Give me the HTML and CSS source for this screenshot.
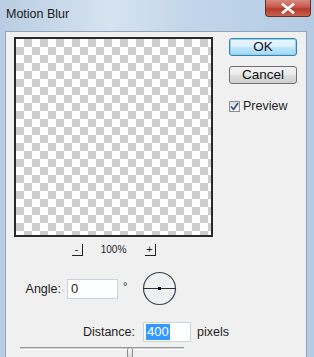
FILE: index.html
```html
<!DOCTYPE html>
<html lang="en">
<head>
    <meta charset="UTF-8">
    <title>Motion Blur</title>
    <link rel="stylesheet" href="styles.css">
</head>
<body>
    <div class="window">
        <div class="titlebar">
            <span class="title">Motion Blur</span>
            <div class="close">
                <svg width="14" height="11" viewBox="0 0 14 11">
                    <path d="M2 1.5 L12 9.5 M12 1.5 L2 9.5" stroke="#ffffff" stroke-width="2.6" stroke-linecap="square"/>
                </svg>
            </div>
        </div>
        <div class="client">
            <div class="main">
                <div class="left">
                    <div class="preview"></div>
                    <div class="zoom-row">
                        <span class="zoom-btn">-</span>
                        <span class="zoom-value">100%</span>
                        <span class="zoom-btn">+</span>
                    </div>
                </div>
                <div class="side">
                    <button class="btn btn-default">OK</button>
                    <button class="btn">Cancel</button>
                    <label class="check">
                        <span class="box">
                            <svg width="9" height="9" viewBox="0 0 9 9">
                                <path d="M1 4.5 L3.5 7.5 L8 1" fill="none" stroke="#2b4a8a" stroke-width="1.6"/>
                            </svg>
                        </span>
                        Preview
                    </label>
                </div>
            </div>
            <div class="angle-row">
                <span class="label angle-label">Angle:</span>
                <span class="field angle-field">0</span>
                <span class="deg">&deg;</span>
                <svg class="dial" width="35" height="35" viewBox="0 0 35 35">
                    <circle cx="17.5" cy="17.5" r="16" fill="none" stroke="#3c4454" stroke-width="1.2"/>
                    <line x1="1.5" y1="17.5" x2="33.5" y2="17.5" stroke="#2a2f3a" stroke-width="1.2"/>
                    <rect x="16" y="16" width="3" height="3" fill="#111"/>
                </svg>
            </div>
            <div class="distance-row">
                <span class="label distance-label">Distance:</span>
                <span class="field distance-field"><span class="sel">400</span></span>
                <span class="unit">pixels</span>
            </div>
            <div class="slider">
                <div class="track"></div>
                <div class="thumb"></div>
            </div>
        </div>
    </div>
</body>
</html>
```

FILE: styles.css
```css
:root {
    --client-bg: #f0f0f0;
    --text: #1e1e1e;
}
body {
    margin: 0;
    font-family: "Liberation Sans", Arial, sans-serif;
    color: var(--text);
}
.window {
    width: 314px;
    height: 357px;
    overflow: hidden;
    background: linear-gradient(90deg, #b9cde2 0%, #d6e3f0 35%, #c2d6ea 60%, #b3cbe3 100%);
    padding: 0 7px 0 5px;
    box-sizing: border-box;
    display: flex;
    flex-direction: column;
}
.titlebar {
    height: 31px;
    display: flex;
    align-items: flex-start;
    flex-shrink: 0;
}
.title {
    font-size: 12.5px;
    margin-top: 7px;
    margin-left: 1px;
    color: #1a1a1a;
}
.close {
    margin-left: auto;
    margin-right: -4px;
    width: 46px;
    height: 17px;
    box-sizing: border-box;
    border: 1px solid #6c2c24;
    border-top: none;
    border-radius: 0 0 4px 4px;
    background: linear-gradient(#d98a7e 0%, #c5574a 45%, #b23a2c 55%, #c9624f 100%);
    display: flex;
    justify-content: center;
    align-items: center;
}
.client {
    flex: 1;
    background: var(--client-bg);
    border: 1px solid #8fa3b9;
    border-bottom: none;
    padding: 5px 0 0 8px;
    font-size: 12px;
}
.main {
    display: flex;
    gap: 16px;
}
.preview {
    width: 199px;
    height: 200px;
    box-sizing: border-box;
    border: 2px solid #2a2a2a;
    background-color: #ffffff;
    background-image:
        linear-gradient(45deg, #cdcdcd 25%, transparent 25%, transparent 75%, #cdcdcd 75%),
        linear-gradient(45deg, #cdcdcd 25%, transparent 25%, transparent 75%, #cdcdcd 75%);
    background-size: 16px 16px;
    background-position: 0 0, 8px 8px;
}
.zoom-row {
    display: flex;
    justify-content: center;
    align-items: center;
    gap: 18px;
    margin-top: 6px;
    height: 13px;
}
.zoom-btn {
    width: 11px;
    height: 12px;
    box-sizing: border-box;
    border-right: 1px solid #222;
    border-bottom: 1px solid #222;
    font-size: 11px;
    line-height: 10px;
    text-align: center;
}
.zoom-value {
    font-size: 10px;
    width: 26px;
    text-align: center;
}
.side {
    display: flex;
    flex-direction: column;
    padding-top: 1px;
}
.btn {
    width: 68px;
    height: 18px;
    margin-bottom: 10px;
    font-family: inherit;
    font-size: 13.5px;
    line-height: 14px;
    padding: 0;
    color: #111;
    border: 1px solid #707070;
    border-radius: 3px;
    background: linear-gradient(#f2f2f2 0%, #ebebeb 50%, #dddddd 51%, #cfcfcf 100%);
}
.btn-default {
    border-color: #3c7fb1;
    box-shadow: inset 0 0 0 1px #8ad4f0;
    background: linear-gradient(#eaf6fd 0%, #d9f0fc 50%, #bee6fd 51%, #a7d9f5 100%);
}
.check {
    display: flex;
    align-items: center;
    gap: 3px;
    margin-top: 5px;
    font-size: 12.5px;
}
.box {
    width: 11px;
    height: 11px;
    box-sizing: border-box;
    border: 1px solid #8f8f8f;
    background: linear-gradient(#dcdcdc, #fafafa);
    display: flex;
    justify-content: center;
    align-items: center;
}
.angle-row,
.distance-row {
    display: flex;
    align-items: center;
    font-size: 12.5px;
}
.angle-row {
    margin-top: 15px;
    height: 35px;
}
.label {
    text-align: right;
}
.angle-label {
    width: 47px;
}
.field {
    height: 20px;
    box-sizing: border-box;
    border: 1px solid #c9d3dd;
    background: #ffffff;
    display: flex;
    align-items: center;
    padding-left: 3px;
    font-size: 13px;
}
.angle-field {
    width: 51px;
    margin-left: 6px;
}
.deg {
    margin-left: 5px;
    margin-top: -6px;
    font-size: 11px;
}
.dial {
    margin-left: 15px;
}
.distance-row {
    margin-top: 15px;
    height: 21px;
}
.distance-label {
    width: 121px;
}
.distance-field {
    width: 48px;
    margin-left: 8px;
    padding-left: 2px;
}
.sel {
    background: #3399ff;
    color: #ffffff;
    padding: 0 1px;
    line-height: 16px;
}
.unit {
    margin-left: 6px;
}
.slider {
    position: relative;
    height: 12px;
    margin: 4px 0 0 6px;
    width: 164px;
}
.track {
    margin-top: 5px;
    height: 1px;
    border-top: 1px solid #9a9a9a;
    border-bottom: 1px solid #ffffff;
    background: #d0d0d0;
}
.thumb {
    position: absolute;
    left: 107px;
    top: 0;
    width: 6px;
    height: 12px;
    box-sizing: border-box;
    border: 1px solid #8a8a8a;
    border-radius: 3px;
    background: linear-gradient(#fafafa, #d8d8d8);
}
```
